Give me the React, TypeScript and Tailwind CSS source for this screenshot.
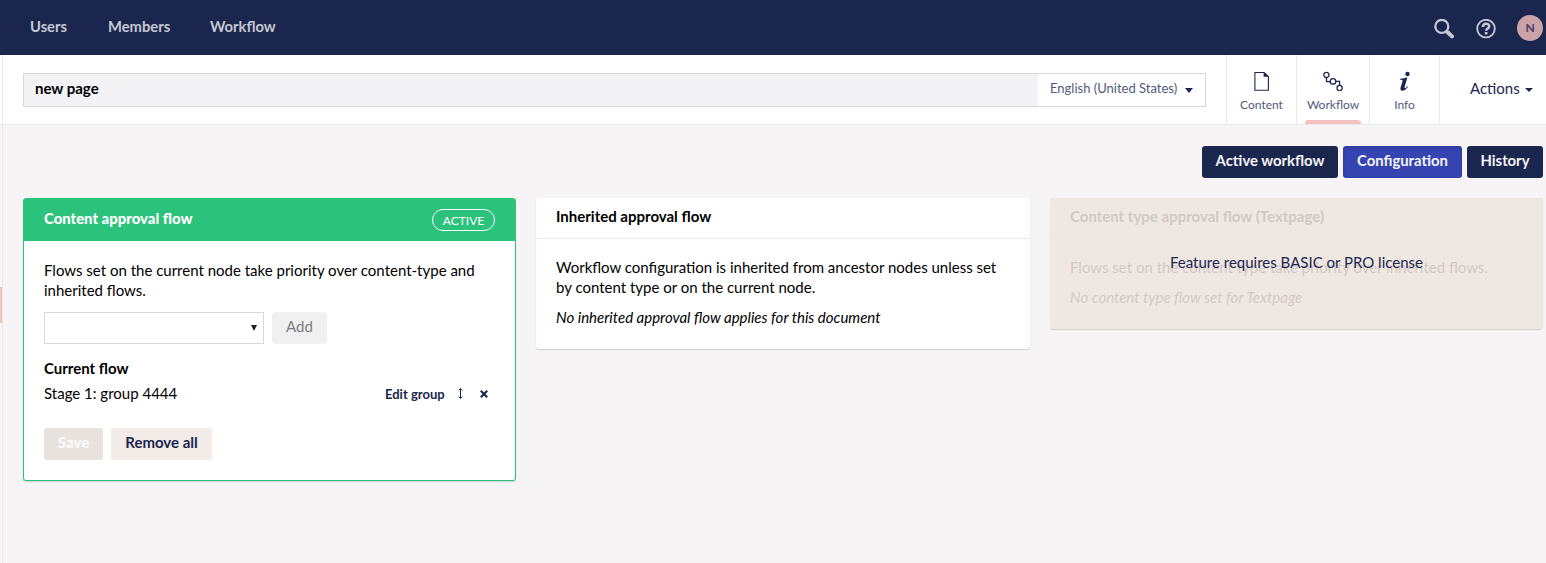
import React from "react";

function SearchIcon() {
  return (
    <svg className="h-5 w-5" viewBox="0 0 20 20" fill="none" stroke="currentColor">
      <circle cx="7.8" cy="7.4" r="6.5" strokeWidth="2.3" />
      <path d="M12.2 11.8L14 13.6" strokeWidth="2.8" />
      <path d="M13.4 13L18 17.4" strokeWidth="4" strokeLinecap="round" />
    </svg>
  );
}

function HelpIcon() {
  return (
    <svg className="h-5 w-5" viewBox="0 0 20 20" fill="none" stroke="currentColor">
      <circle cx="10" cy="9.6" r="8.8" strokeWidth="1.9" />
      <path d="M6.9 7.9C6.9 3.7 13.2 3.8 13.2 7.4C13.2 9.7 10.2 9.5 10.2 11.8" strokeWidth="2.5" />
      <path d="M8.8 13H11.5V15.4H8.8Z" fill="currentColor" stroke="none" />
    </svg>
  );
}

function DocumentIcon() {
  return (
    <svg className="h-5 w-5" viewBox="0 0 20 20" fill="none" stroke="currentColor">
      <path d="M2.9 1.5H12L16.4 5.5V19.3H2.9Z" strokeWidth="1.1" />
      <path d="M11.6 1L16.9 5.8H11.6Z" fill="currentColor" stroke="none" />
    </svg>
  );
}

function FlowIcon() {
  return (
    <svg className="h-5 w-5" viewBox="0 0 20 20" fill="none" stroke="currentColor" strokeWidth="1.3">
      <circle cx="3.4" cy="3.9" r="2.6" />
      <circle cx="10" cy="10.4" r="2.8" />
      <circle cx="16.6" cy="17" r="2.6" />
      <path d="M3.5 6.5V10.6H7.2M12.8 10.4H16.6V14.4" />
    </svg>
  );
}

function InfoIcon() {
  return (
    <svg className="h-5 w-5" viewBox="0 0 20 20" fill="currentColor">
      <circle cx="12.5" cy="3" r="2.2" />
      <path d="M5.2 7.8C8 7.6 10 7.1 12.4 6.6L9.6 16.1C9.2 17.7 10.2 17.6 12.4 15.2L13 15.8C11 18.6 9.3 19.7 7.5 19.7C5.5 19.7 5.1 18.2 5.6 16.5L7.6 9.9C7.9 8.9 7 8.8 5.1 8.7Z" />
    </svg>
  );
}

function Caret({ className = "" }: { className?: string }) {
  return (
    <svg className={className} viewBox="0 0 8 5" fill="currentColor" preserveAspectRatio="none">
      <path d="M0 0H8L4 5Z" />
    </svg>
  );
}

function TopBar() {
  return (
    <header className="flex h-[55px] items-center justify-between bg-[#1b264f] pr-[3px] pl-[30px] text-[#c5c8d3]">
      <nav className="flex gap-10 pb-1 text-[14.75px] leading-5 font-bold">
        <span className="w-[38px]">Users</span>
        <span className="w-[62px]">Members</span>
        <span>Workflow</span>
      </nav>
      <div className="flex items-center pt-0.5">
        <SearchIcon />
        <span className="ml-[22px] flex">
          <HelpIcon />
        </span>
        <span className="mb-0.5 ml-[21px] flex h-[26px] w-[26px] items-center justify-center rounded-full bg-[#cba2a5] text-[12px] font-bold text-[#444066]">
          N
        </span>
      </div>
    </header>
  );
}

const tabBase = "flex flex-col items-center border-l border-[#e9e9eb] pt-4 text-[#1b264f] relative";

function EditorHeader() {
  return (
    <div className="flex h-[70px] border-b border-[#e9e9eb] bg-white">
      <div className="mt-[18px] ml-5 flex h-[34px] w-[1183px] border border-[#d8d7d9] bg-[#f3f3f5]">
        <div className="flex-1 pt-1 pl-[11px] text-[15px] leading-5 font-bold text-black">new page</div>
        <div className="flex w-[167px] items-center bg-white pl-3 text-[13px] text-[#515a7b]">
          <span className="w-[128px] pb-1 whitespace-nowrap">English (United States)</span>
          <Caret className="mt-px ml-[7px] h-[5px] w-2 text-[#1b264f]" />
        </div>
      </div>
      <div className="ml-5 flex text-[12px] leading-4">
        <div className={`${tabBase} w-[70px]`}>
          <DocumentIcon />
          <span className="mt-[6px] text-[#515a7b]">Content</span>
        </div>
        <div className={`${tabBase} w-[73px]`}>
          <FlowIcon />
          <span className="mt-[6px] text-[#515a7b]">Workflow</span>
          <span className="absolute bottom-0 left-2 h-1 w-14 rounded-t-[3px] bg-[#f5c1bc]" />
        </div>
        <div className={`${tabBase} w-[70px]`}>
          <InfoIcon />
          <span className="mt-[6px] text-[#515a7b]">Info</span>
        </div>
        <div className="flex items-center border-l border-[#e9e9eb] pl-[30px] text-[15px] text-[#1b264f]">
          <span className="w-[50px] pb-1">Actions</span>
          <Caret className="ml-[5px] h-1 w-2" />
        </div>
      </div>
    </div>
  );
}

function FlowCard({ title, children, className = "" }: { title: string; children: React.ReactNode; className?: string }) {
  return (
    <section className={`relative rounded-[3px] bg-white shadow-[0_1px_1px_0_rgba(0,0,0,0.16)] ${className}`}>
      <h2 className="h-[41px] border-b border-[#e9e9eb] pt-2 pl-[20px] text-[15px] leading-5 font-bold">{title}</h2>
      <div className="px-[20px] pt-[18px]">{children}</div>
    </section>
  );
}

export default function App() {
  return (
    <div className="h-[563px] w-[1546px] overflow-hidden bg-[#f6f4f5] font-['Lato',sans-serif] text-[15px] leading-5 text-black">
      <TopBar />
      <div className="flex h-[508px]">
        <div className="flex w-[3px] shrink-0 flex-col border-r border-[#e9e9eb] bg-[#f6f4f5]">
          <div className="h-[70px] border-b border-[#e9e9eb] bg-white" />
          <div className="mt-[162px] h-9 bg-[#f5c1bc]" />
        </div>
        <main className="flex-1">
          <EditorHeader />
          <div className="mt-[21px] flex justify-end gap-[5px] pr-[3px] text-[14.85px] font-bold text-[#f4f4f6]">
            <button className="h-8 w-[136px] rounded-[3px] bg-[#1b264f] pb-1">Active workflow</button>
            <button className="h-8 w-[119px] rounded-[3px] bg-[#3544b1] pb-1 shadow-[inset_0_2px_4px_rgba(0,0,0,0.15)]">
              Configuration
            </button>
            <button className="h-8 w-[76px] rounded-[3px] bg-[#1b264f] pb-1">History</button>
          </div>
          <div className="mt-5 ml-5 flex items-start gap-5">
            <section className="h-[283px] w-[493px] rounded-[3px] border border-[#2bc37c] bg-white shadow-[0_1px_1px_0_rgba(0,0,0,0.16)]">
              <div className="flex h-[42px] justify-between bg-[#2bc37c] pr-5 pl-[20px] text-white">
                <h2 className="pt-[9px] text-[14.9px] font-black">Content approval flow</h2>
                <span className="mt-[10px] flex h-[22px] w-[63px] items-center justify-center rounded-full border border-white pt-px text-[12px]">
                  ACTIVE
                </span>
              </div>
              <div className="px-[20px] pt-[19px]">
                <p>
                  Flows set on the current node take priority over content-type and
                  <br />
                  inherited flows.
                </p>
                <div className="mt-3 flex gap-2">
                  <div className="flex h-8 w-[220px] items-center justify-end border border-[#d8d7d9] pr-[6px]">
                    <Caret className="h-[6px] w-[6px] text-[#222]" />
                  </div>
                  <button className="h-8 w-[55px] rounded-[3px] bg-[#f0f0f0] pb-1 text-[#7d7d7d]">Add</button>
                </div>
                <h3 className="mt-[14px] font-bold">Current flow</h3>
                <div className="mt-[5px] flex h-5 items-center">
                  <span className="w-[341px]">Stage 1: group 4444</span>
                  <span className="w-[60px] pt-px text-[13px] font-bold whitespace-nowrap text-[#1b264f]">Edit group</span>
                  <svg className="mt-px ml-[13px] h-[11px] w-[5px]" viewBox="0 0 5 11" fill="none" stroke="#1b264f">
                    <path d="M2.5 1V10M0.7 2.3L2.5 0.6L4.3 2.3M0.7 8.7L2.5 10.4L4.3 8.7" />
                  </svg>
                  <svg className="mt-0.5 ml-[17px] h-2 w-2" viewBox="0 0 8 8" stroke="#1b264f" strokeWidth="2.1">
                    <path d="M0.8 0.8L7.2 7.2M7.2 0.8L0.8 7.2" />
                  </svg>
                </div>
                <div className="mt-[25px] flex gap-2">
                  <button className="h-8 w-[59px] rounded-[3px] bg-[#e8e3df] pb-1 font-black text-[#fbfafa]">Save</button>
                  <button className="h-8 w-[101px] rounded-[3px] bg-[#f3ebe8] pb-1 font-bold text-[#1b264f]">
                    Remove all
                  </button>
                </div>
              </div>
            </section>
            <FlowCard title="Inherited approval flow" className="h-[151px] w-[494px]">
              <p>
                Workflow configuration is inherited from ancestor nodes unless set
                <br />
                by content type or on the current node.
              </p>
              <p className="mt-[10px] italic">No inherited approval flow applies for this document</p>
            </FlowCard>
            <FlowCard title="Content type approval flow (Textpage)" className="h-[131px] w-[493px]">
              <p className="whitespace-nowrap">Flows set on the content type take priority over inherited flows.</p>
              <p className="mt-[10px] italic">No content type flow set for Textpage</p>
              <div className="absolute inset-0 rounded-b-[3px] bg-[#ede4de]/88" />
              <div className="absolute inset-0 flex items-center justify-center pb-[3px] text-[#1b264f]">
                Feature requires BASIC or PRO license
              </div>
            </FlowCard>
          </div>
        </main>
      </div>
    </div>
  );
}
